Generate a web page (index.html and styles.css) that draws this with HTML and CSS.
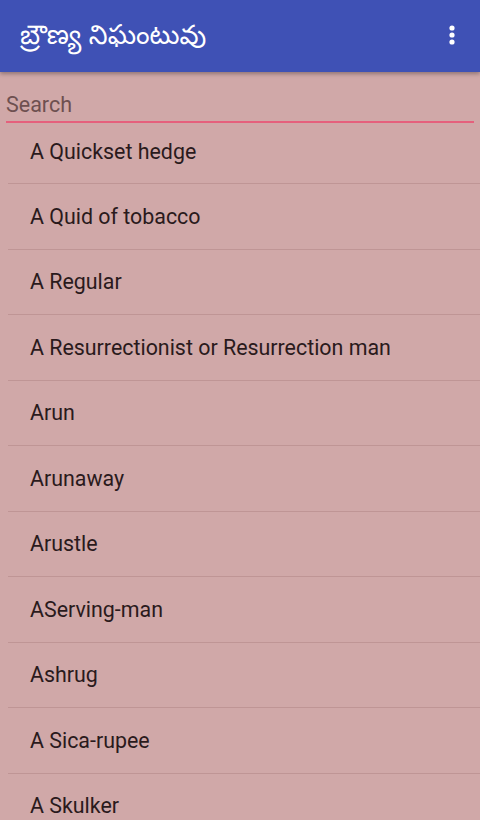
FILE: index.html
```html
<!DOCTYPE html>
<html>
<head>
<meta charset="utf-8">
<link rel="stylesheet" href="styles.css">
</head>
<body>
<div class="app">
  <header class="toolbar">
    <span class="title">బ్రౌణ్య నిఘంటువు</span>
    <svg class="menu" width="8" height="24" viewBox="0 0 8 24">
      <circle cx="4" cy="5" r="2.6" fill="#fff"/>
      <circle cx="4" cy="12" r="2.6" fill="#fff"/>
      <circle cx="4" cy="19" r="2.6" fill="#fff"/>
    </svg>
  </header>
  <div class="search">
    <span class="placeholder">Search</span>
  </div>
  <ul class="list">
    <li class="row">A Quickset hedge</li>
    <li class="row">A Quid of tobacco</li>
    <li class="row">A Regular</li>
    <li class="row">A Resurrectionist or Resurrection man</li>
    <li class="row">Arun</li>
    <li class="row">Arunaway</li>
    <li class="row">Arustle</li>
    <li class="row">AServing-man</li>
    <li class="row">Ashrug</li>
    <li class="row">A Sica-rupee</li>
    <li class="row">A Skulker</li>
  </ul>
</div>
</body>
</html>
```
FILE: styles.css
```css
html, body {
  margin: 0;
  padding: 0;
  width: 480px;
  height: 820px;
  overflow: hidden;
  background: #d0a8a8;
  font-family: Roboto, "Noto Sans", sans-serif;
}
.app {
  display: flex;
  flex-direction: column;
  height: 820px;
}
.toolbar {
  position: relative;
  z-index: 2;
  height: 72px;
  flex: none;
  background: #3f51b5;
  display: flex;
  align-items: center;
  justify-content: space-between;
  padding: 0 24px 0 20px;
  box-shadow: 0 2px 4px rgba(0,0,0,0.3);
}
.title {
  color: #fff;
  font-size: 26.8px;
  font-family: "Noto Sans Telugu", "Noto Sans", sans-serif;
  margin-top: 5px;
}
.menu {
  display: block;
  margin-top: -2px;
}
.search {
  flex: none;
  height: 51px;
  margin: 0 6px;
  border-bottom: 2px solid #e5607c;
  display: flex;
  align-items: center;
  box-sizing: border-box;
  padding-top: 15px;
}
.placeholder {
  color: #6e5050;
  font-size: 21.5px;
}
.list {
  list-style: none;
  margin: 0;
  padding: 0;
}
.row {
  height: 65.5px;
  box-sizing: border-box;
  margin-left: 8px;
  padding-left: 22px;
  display: flex;
  align-items: center;
  color: #2a1a1c;
  font-size: 21.4px;
  border-bottom: 1.5px solid #bf9595;
}
.list .row:first-child {
  height: 61px;
  padding-bottom: 3px;
}
```
